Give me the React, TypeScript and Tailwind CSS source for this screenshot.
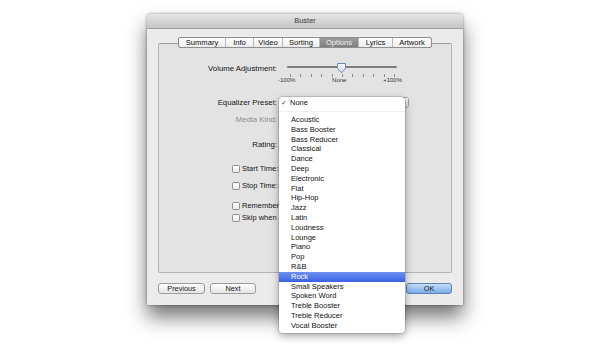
const tabs = [
  { label: 'Summary', cls: 'w-[46px]' },
  { label: 'Info', cls: 'w-[28px]' },
  { label: 'Video', cls: 'w-[29px]' },
  { label: 'Sorting', cls: 'w-[37px]' },
  { label: 'Options', cls: 'w-[39px]', active: true },
  { label: 'Lyrics', cls: 'w-[34px]' },
  { label: 'Artwork', cls: 'w-[39px]' },
];

const presets = [
  'Acoustic', 'Bass Booster', 'Bass Reducer', 'Classical', 'Dance', 'Deep',
  'Electronic', 'Flat', 'Hip-Hop', 'Jazz', 'Latin', 'Loudness', 'Lounge',
  'Piano', 'Pop', 'R&B', 'Rock', 'Small Speakers', 'Spoken Word',
  'Treble Booster', 'Treble Reducer', 'Vocal Booster',
];

function Tabs() {
  return (
    <div className="relative z-10 flex h-[11px] justify-center">
      <div className="flex overflow-hidden rounded-[2px] border border-[#8f8f8f] bg-linear-to-b from-white to-[#ececec]">
        {tabs.map((t, i) => (
          <div
            key={t.label}
            className={
              t.cls +
              ' text-center text-[7.6px] leading-[9px] ' +
              (i > 0 ? 'border-l border-[#b8b8b8] ' : '') +
              (t.active ? 'bg-linear-to-b from-[#9b9b9b] to-[#7f7f7f] text-[#f2f2f2]' : 'text-[#111]')
            }
          >
            {t.label}
          </div>
        ))}
      </div>
    </div>
  );
}

function Slider() {
  return (
    <div className="ml-[4px] flex w-[120px] flex-col">
      <div className="relative h-[12px]">
        <div className="absolute left-[6px] right-[4px] top-[4px] h-[2px] rounded-full bg-[#7e7e7e]" />
        <svg className="absolute left-[55px] top-0" width="11" height="12" viewBox="0 0 11 12">
          <defs>
            <linearGradient id="thumb" x1="0" y1="0" x2="0" y2="1">
              <stop offset="0" stopColor="#ffffff" />
              <stop offset="1" stopColor="#c9d8ec" />
            </linearGradient>
          </defs>
          <path d="M1.5 1.5 H9.5 V6.5 L5.5 10.8 L1.5 6.5 Z" fill="url(#thumb)" stroke="#6c89b2" strokeWidth="1" />
        </svg>
      </div>
      <div className="ml-[9px] flex h-[3px] w-[105px] justify-between">
        {Array.from({ length: 11 }).map((_, i) => (
          <div key={i} className="h-[3px] w-px bg-[#8c8c8c]" />
        ))}
      </div>
      <div className="-ml-[3px] -mt-[1px] flex h-[9px] w-[124px] justify-between text-[6px] leading-[9px] text-[#333]">
        <span>-100%</span>
        <span>None</span>
        <span>+100%</span>
      </div>
    </div>
  );
}

function Check({ label, cls }: { label: string; cls: string }) {
  return (
    <div className={cls + ' flex h-[10px] items-center pl-[73px]'}>
      <div className="h-[8px] w-[8px] shrink-0 rounded-[1.5px] border border-[#8e8e8e] bg-linear-to-b from-white to-[#e9e9e9]" />
      <span className="ml-[2px] whitespace-nowrap text-[7.5px] leading-[10px]">{label}</span>
    </div>
  );
}

function Button({ label, cls, primary }: { label: string; cls: string; primary?: boolean }) {
  return (
    <div
      className={
        cls +
        ' h-[11px] rounded-[3px] border text-center text-[7.3px] leading-[9px] ' +
        (primary
          ? 'border-[#5d82b6] bg-linear-to-b from-[#c6def7] to-[#78ace8]'
          : 'border-[#9c9c9c] bg-linear-to-b from-white to-[#e4e4e4]')
      }
    >
      {label}
    </div>
  );
}

function Menu() {
  return (
    <div className="absolute left-[132px] top-[83px] z-20 w-[126px] rounded-[4px] bg-white pb-[2px] pt-[1px] shadow-[0_3px_8px_rgba(0,0,0,0.35),0_0_0_1px_rgba(0,0,0,0.12)]">
      <div className="flex h-[10px] items-center text-[7.5px] leading-[10px]">
        <span className="w-[11px] pl-[2px] font-['DejaVu_Sans'] text-[6.5px]">✓</span>
        <span>None</span>
      </div>
      <div className="flex h-[7px] items-center">
        <div className="h-px w-full bg-[#efefef]" />
      </div>
      {presets.map((p) => (
        <div
          key={p}
          className={
            'h-[9.8px] pl-[12px] text-[7.5px] leading-[9.8px] ' +
            (p === 'Rock' ? 'bg-linear-to-b from-[#6f91f1] to-[#3b60e4] text-white' : 'text-[#111]')
          }
        >
          {p}
        </div>
      ))}
    </div>
  );
}

export default function App() {
  return (
    <div className="h-[347px] w-[608px] overflow-hidden bg-white pl-[147px] pt-[14px] font-['Liberation_Sans',Arial,sans-serif] text-[#151515]">
      <div className="relative flex h-[291px] w-[316px] flex-col rounded-t-[4px] bg-[#ebebeb] shadow-[0_12px_20px_rgba(0,0,0,0.55),0_0_3px_rgba(0,0,0,0.45)]">
        <div className="h-[15px] rounded-t-[4px] border-b border-[#a0a0a0] bg-linear-to-b from-[#e6e6e6] to-[#c5c5c5] text-center text-[7.5px] leading-[14px] text-[#3a3a3a]">
          Buster
        </div>
        <div className="flex flex-col px-[11px] pt-[8px]">
          <Tabs />
          <div className="-mt-[5px] flex h-[230px] flex-col rounded-[2px] border border-[#b4b4b4] border-t-[#9e9e9e] bg-[#e3e3e3]">
            <div className="mt-[18px] flex">
              <div className="w-[118px] pt-[2px] text-right text-[7.8px] leading-[10px]">Volume Adjustment:</div>
              <Slider />
            </div>
            <div className="mt-[12px] flex h-[11px] items-center">
              <div className="w-[118px] text-right text-[7.8px] leading-[11px]">Equalizer Preset:</div>
              <div className="ml-[5px] flex h-[11px] w-[127px] rounded-[3px] border border-[#a2a2a2] bg-linear-to-b from-white to-[#e8e8e8]">
                <div className="flex-1" />
                <div className="w-[9px] border-l border-[#b8b8b8] bg-linear-to-b from-[#f4f4f4] to-[#d6d6d6]" />
              </div>
            </div>
            <div className="mt-[7px] flex h-[10px]">
              <div className="w-[118px] text-right text-[7.8px] leading-[10px] text-[#8d8d8d]">Media Kind:</div>
            </div>
            <div className="mt-[15px] flex h-[10px]">
              <div className="w-[118px] text-right text-[7.8px] leading-[10px]">Rating:</div>
            </div>
            <Check cls="mt-[14px]" label="Start Time:" />
            <Check cls="mt-[7px]" label="Stop Time:" />
            <Check cls="mt-[10px]" label="Remember" />
            <Check cls="mt-[2px]" label="Skip when" />
          </div>
          <div className="mt-[10px] flex">
            <Button label="Previous" cls="w-[47px]" />
            <Button label="Next" cls="ml-[5px] w-[46px]" />
            <Button label="OK" cls="ml-auto w-[46px]" primary />
          </div>
        </div>
        <Menu />
      </div>
    </div>
  );
}
